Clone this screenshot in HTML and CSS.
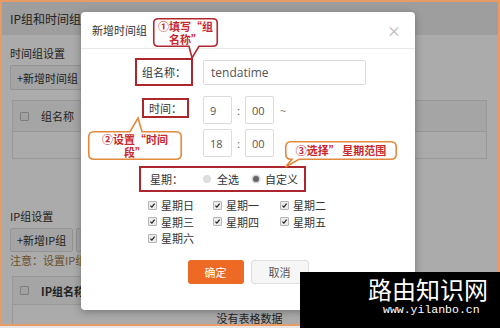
FILE: index.html
```html
<!DOCTYPE html>
<html lang="zh-CN">
<head>
    <meta charset="utf-8">
    <title>IP组和时间组</title>
    <link rel="stylesheet" href="styles.css">
</head>
<body>
    <div class="screen">
        <div class="page-head">IP组和时间组</div>
        <div class="page-main">
            <div class="section-title">时间组设置</div>
            <div class="btn-row"><span class="page-btn">+新增时间组</span></div>
            <div class="table">
                <div class="table-head"><span class="box"></span><span>组名称</span></div>
                <div class="table-row"></div>
            </div>
            <div class="section-title second">IP组设置</div>
            <div class="btn-row"><span class="page-btn small">+新增IP组</span><span class="page-btn small">删除IP组</span></div>
            <div class="note">注意：设置IP组后，请到相应的功能页面引用。</div>
            <div class="table tight">
                <div class="table-head"><span class="box"></span><b>IP组名称</b></div>
                <div class="table-row empty">没有表格数据</div>
            </div>
        </div>

        <div class="mask"></div>

        <div class="dialog">
            <div class="dialog-head">
                <span>新增时间组</span>
                <span class="close">×</span>
            </div>
            <div class="dialog-body">
                <div class="row">
                    <div class="row-label"><span class="mark name-mark">组名称：</span></div>
                    <div class="field"><span class="text-input">tendatime</span></div>
                </div>
                <div class="row gap10">
                    <div class="row-label"><span class="mark time-mark">时间：</span></div>
                    <div class="field">
                        <span class="num">9</span><span class="colon">:</span><span class="num">00</span><span class="tilde">~</span>
                    </div>
                </div>
                <div class="row gap5">
                    <div class="row-label"></div>
                    <div class="field">
                        <span class="num">18</span><span class="colon">:</span><span class="num">00</span>
                    </div>
                </div>
                <div class="week-box">
                    <span class="week-label">星期：</span>
                    <span class="radio"></span><span class="radio-text">全选</span>
                    <span class="radio on"></span><span class="radio-text">自定义</span>
                </div>
                <div class="days">
                    <span class="day"><span class="check"><svg viewBox="0 0 9 9"><path d="M1.8 4.6 L3.7 6.6 L7.2 2.2" fill="none" stroke="#222" stroke-width="1.6"/></svg></span>星期日</span>
                    <span class="day"><span class="check"><svg viewBox="0 0 9 9"><path d="M1.8 4.6 L3.7 6.6 L7.2 2.2" fill="none" stroke="#222" stroke-width="1.6"/></svg></span>星期一</span>
                    <span class="day"><span class="check"><svg viewBox="0 0 9 9"><path d="M1.8 4.6 L3.7 6.6 L7.2 2.2" fill="none" stroke="#222" stroke-width="1.6"/></svg></span>星期二</span>
                    <span class="day"><span class="check"><svg viewBox="0 0 9 9"><path d="M1.8 4.6 L3.7 6.6 L7.2 2.2" fill="none" stroke="#222" stroke-width="1.6"/></svg></span>星期三</span>
                    <span class="day"><span class="check"><svg viewBox="0 0 9 9"><path d="M1.8 4.6 L3.7 6.6 L7.2 2.2" fill="none" stroke="#222" stroke-width="1.6"/></svg></span>星期四</span>
                    <span class="day"><span class="check"><svg viewBox="0 0 9 9"><path d="M1.8 4.6 L3.7 6.6 L7.2 2.2" fill="none" stroke="#222" stroke-width="1.6"/></svg></span>星期五</span>
                    <span class="day"><span class="check"><svg viewBox="0 0 9 9"><path d="M1.8 4.6 L3.7 6.6 L7.2 2.2" fill="none" stroke="#222" stroke-width="1.6"/></svg></span>星期六</span>
                </div>
                <div class="actions">
                    <span class="btn ok">确定</span>
                    <span class="btn cancel">取消</span>
                </div>
            </div>

            <!-- callouts drawn on the screenshot -->
            <div class="callout c1">
                <svg class="bubble" width="65" height="29" viewBox="0 0 65 29">
                    <path d="M5 0.75 H60 Q64.25 0.75 64.25 5 V24 Q64.25 28.25 60 28.25 H46 L39 40 L36 28.25 H5 Q0.75 28.25 0.75 24 V5 Q0.75 0.75 5 0.75 Z" fill="#fff" stroke="#b3272e" stroke-width="1.6"/>
                </svg>
                <div class="callout-text">①填写“组<br>名称”</div>
            </div>
            <div class="callout c2">
                <svg class="bubble" width="94" height="29" viewBox="0 0 94 29">
                    <path d="M6 0.75 H42 L50 -13 L54 0.75 H88 Q93.25 0.75 93.25 6 V23 Q93.25 28.25 88 28.25 H6 Q0.75 28.25 0.75 23 V6 Q0.75 0.75 6 0.75 Z" fill="#fff" stroke="#e08a3e" stroke-width="1.6"/>
                </svg>
                <div class="callout-text">②设置“时间<br>段”</div>
            </div>
            <div class="callout c3">
                <svg class="bubble" width="112" height="19" viewBox="0 0 112 19">
                    <path d="M6 0.75 H106 Q111.25 0.75 111.25 6 V13 Q111.25 18.25 106 18.25 H14 L0.5 26 L7 18.25 H6 Q0.75 18.25 0.75 13 V6 Q0.75 0.75 6 0.75 Z" fill="#fff" stroke="#e08a3e" stroke-width="1.6"/>
                </svg>
                <div class="callout-text">③选择” 星期范围</div>
            </div>
        </div>
    </div>

    <div class="ghost-dot"></div>
    <div class="watermark">
        <div class="wm-name">路由知识网</div>
        <div class="wm-url">www.yilanbo.cn</div>
    </div>
</body>
</html>
```

FILE: styles.css
```css
* { padding: 0; margin: 0; box-sizing: border-box; }
html { background-color: #e6e6e6; }
body {
    font-family: "Noto Sans CJK SC", "Noto Sans", sans-serif;
    width: 500px;
    height: 328px;
    position: relative;
    overflow: hidden;
}
.screen {
    position: relative;
    width: 500px;
    height: 326px;
    border: 2px solid #e99b66;
    background-color: #fff;
    overflow: hidden;
}

/* page behind the dialog */
.page-head {
    height: 33px;
    background-color: #ececec;
    padding-left: 8px;
    display: flex;
    align-items: center;
    font-size: 12px;
    color: #333;
}
.page-main { padding: 0 11px 0 8px; }
.section-title {
    font-size: 11px;
    line-height: 14px;
    color: #333;
    margin-top: 11px;
}
.section-title.second { margin-top: 50px; }
.btn-row { display: flex; gap: 3px; margin-top: 5px; }
.page-btn {
    height: 25px;
    padding: 0 6px;
    display: flex;
    align-items: center;
    font-size: 11px;
    color: #333;
    background-color: #f5f5f5;
    border: 1px solid #dcdcdc;
    border-radius: 2px;
}
.page-btn.small { height: 24px; }
.note {
    font-size: 11px;
    line-height: 14px;
    color: #9b7a44;
    margin-top: 1px;
}
.table {
    margin: 10px 0 0 2px;
    border: 1px solid #e3e3e3;
}
.table.tight { margin-top: 9px; }
.table-head {
    height: 30px;
    background-color: #f6f6f6;
    display: flex;
    align-items: center;
    gap: 12px;
    padding-left: 7px;
    font-size: 11px;
    color: #333;
}
.table.tight .table-head { height: 27px; }
.table-head b { font-weight: bold; }
.box {
    width: 9px;
    height: 9px;
    border: 1px solid #bbb;
    background-color: #f0f0f0;
    border-radius: 1px;
}
.table-row {
    height: 27px;
    border-top: 1px solid #e3e3e3;
}
.table-row.empty {
    height: 30px;
    text-align: center;
    font-size: 11px;
    line-height: 26px;
    color: #333;
}

.mask {
    position: absolute;
    top: 0;
    left: 0;
    right: 0;
    bottom: 0;
    background-color: rgba(0, 0, 0, 0.33);
}

/* dialog */
.dialog {
    position: absolute;
    left: 79px;
    top: 10px;
    width: 334px;
    height: 298px;
    background-color: #fff;
    border-radius: 4px;
    box-shadow: 0 2px 8px rgba(0, 0, 0, 0.3);
}
.dialog-head {
    height: 37px;
    border-bottom: 1px solid #e8e8e8;
    display: flex;
    align-items: center;
    justify-content: space-between;
    padding: 0 14px 0 11px;
    font-size: 11px;
    color: #333;
}
.close { color: #b5b5b5; font-size: 14px; }
.dialog-body { padding-top: 9px; }
.row { display: flex; align-items: flex-start; }
.row.gap10 { margin-top: 10px; }
.row.gap5 { margin-top: 5px; }
.row-label {
    width: 112px;
    flex-shrink: 0;
    display: flex;
    justify-content: flex-end;
}
.mark {
    border: 2px solid #ab262d;
    display: flex;
    align-items: center;
    justify-content: center;
    font-size: 11px;
    color: #333;
}
.name-mark { width: 58px; height: 28px; }
.time-mark { width: 47px; height: 20px; margin: 2px 4px 0 0; }
.field {
    margin-left: 10px;
    display: flex;
    align-items: center;
    height: 28px;
}
.text-input {
    width: 163px;
    height: 25px;
    margin-top: 1px;
    border: 1px solid #dcdcdc;
    border-radius: 2px;
    padding-left: 7px;
    display: flex;
    align-items: center;
    font-family: "Open Sans", "Noto Sans", sans-serif;
    font-size: 12px;
    color: #555;
}
.num {
    width: 29px;
    height: 28px;
    border: 1px solid #dcdcdc;
    border-radius: 2px;
    padding-left: 6px;
    display: flex;
    align-items: center;
    font-family: "Open Sans", "Noto Sans", sans-serif;
    font-size: 11px;
    color: #555;
}
.colon { width: 13px; text-align: center; font-size: 11px; color: #777; }
.tilde { margin-left: 6px; font-size: 11px; color: #777; }

.week-box {
    margin: 9px 0 0 58px;
    width: 167px;
    height: 26px;
    border: 2px solid #ab262d;
    display: flex;
    align-items: center;
    font-size: 11px;
    color: #333;
    white-space: nowrap;
}
.week-box > span { flex-shrink: 0; }
.week-label { width: 62px; padding-left: 9px; }
.radio {
    width: 8px;
    height: 8px;
    border-radius: 50%;
    background-color: #dedede;
    margin-right: 6px;
}
.radio.on {
    background-color: #666;
    box-shadow: 0 0 0 1.5px #d6d6d6;
    width: 6px;
    height: 6px;
    margin-left: 2px;
}
.radio-text { margin-right: 12px; }

.days {
    margin: 5px 0 0 67px;
    display: grid;
    grid-template-columns: 65px 67px auto;
    grid-auto-rows: 16.5px;
    font-size: 11px;
    color: #333;
}
.day { display: flex; align-items: center; }
.check {
    width: 9px;
    height: 9px;
    border: 1px solid #b5b5b5;
    background-color: #ececec;
    border-radius: 1px;
    margin-right: 4px;
    display: flex;
}
.check svg { width: 100%; height: 100%; }

.actions {
    margin-top: 13px;
    display: flex;
    justify-content: center;
    gap: 7px;
}
.btn {
    height: 24px;
    display: flex;
    align-items: center;
    justify-content: center;
    font-size: 11px;
    border-radius: 3px;
}
.btn.ok { width: 56px; background-color: #ee6a24; color: #fff; }
.btn.cancel { width: 58px; background-color: #f6f6f6; border: 1px solid #dedede; color: #555; }

/* annotation bubbles */
.callout { position: absolute; }
.bubble { position: absolute; left: 0; top: 0; overflow: visible; }
.callout-text {
    position: relative;
    height: 100%;
    display: flex;
    align-items: center;
    justify-content: center;
    text-align: center;
    font-size: 11px;
    line-height: 13px;
    font-weight: bold;
    color: #c8282e;
    white-space: nowrap;
}
.c1 { left: 72px; top: 6px; width: 65px; height: 29px; }
.c2 { left: 7px; top: 119px; width: 94px; height: 29px; }
.c3 { left: 204px; top: 129px; width: 112px; height: 19px; }

/* watermark */
.ghost-dot {
    position: absolute;
    left: 366px;
    top: 263px;
    width: 32px;
    height: 32px;
    border-radius: 50%;
    background-color: #fff;
}
.watermark {
    position: absolute;
    left: 300px;
    top: 272px;
    width: 200px;
    height: 56px;
    background-color: #000;
    color: #fff;
}
.wm-name {
    padding-left: 68px;
    margin-top: 3px;
    font-size: 24px;
    line-height: 28px;
    letter-spacing: 0;
}
.wm-url {
    padding-left: 83px;
    font-family: "Liberation Mono", monospace;
    font-size: 11.5px;
    line-height: 14px;
}
```
